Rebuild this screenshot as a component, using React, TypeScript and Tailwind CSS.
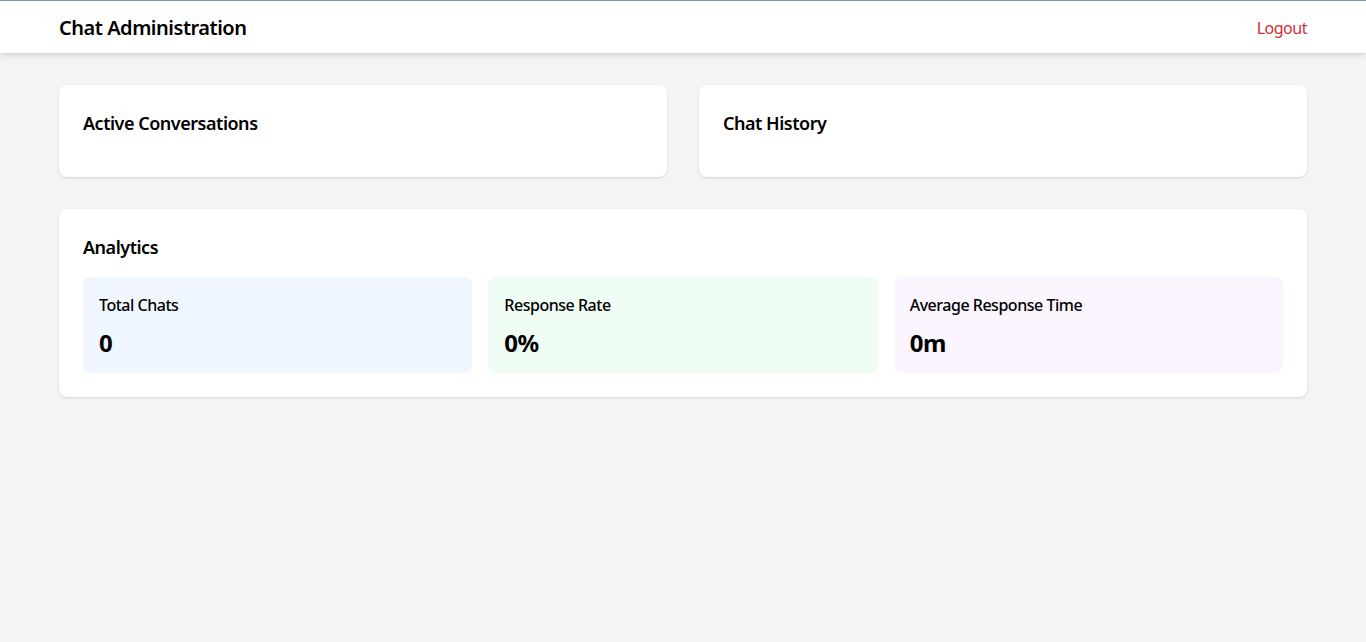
const STATS = [
  { label: 'Total Chats', value: '0', bg: 'bg-blue-50' },
  { label: 'Response Rate', value: '0%', bg: 'bg-green-50' },
  { label: 'Average Response Time', value: '0m', bg: 'bg-purple-50' },
] as const

function Panel({ title, children }: { title: string; children?: React.ReactNode }) {
  return (
    <section className="rounded-lg bg-white p-6 shadow">
      <h2 className="mb-4 text-lg font-semibold">{title}</h2>
      {children}
    </section>
  )
}

export default function App() {
  return (
    <div
      className="min-h-screen bg-gray-100 tracking-[-0.03em] text-black"
      style={{ fontFamily: '"Noto Sans", "Open Sans", sans-serif' }}
    >
      <header className="border-t border-[#6f94b8] bg-white shadow-md">
        <div className="mx-auto flex max-w-7xl items-center justify-between px-4 pt-[13px] pb-[11px]">
          <h1 className="text-xl font-semibold">Chat Administration</h1>
          <button className="text-[#d22f35]">Logout</button>
        </div>
      </header>
      <main className="mx-auto max-w-7xl px-4 py-8">
        <div className="grid grid-cols-2 gap-8">
          <Panel title="Active Conversations" />
          <Panel title="Chat History" />
        </div>
        <div className="mt-8">
          <Panel title="Analytics">
            <div className="grid grid-cols-3 gap-4">
              {STATS.map((stat) => (
                <div key={stat.label} className={`rounded-lg px-4 pt-4 pb-[14px] ${stat.bg}`}>
                  <h3 className="font-medium">{stat.label}</h3>
                  <p className="mt-[10px] text-2xl font-bold">{stat.value}</p>
                </div>
              ))}
            </div>
          </Panel>
        </div>
      </main>
    </div>
  )
}
